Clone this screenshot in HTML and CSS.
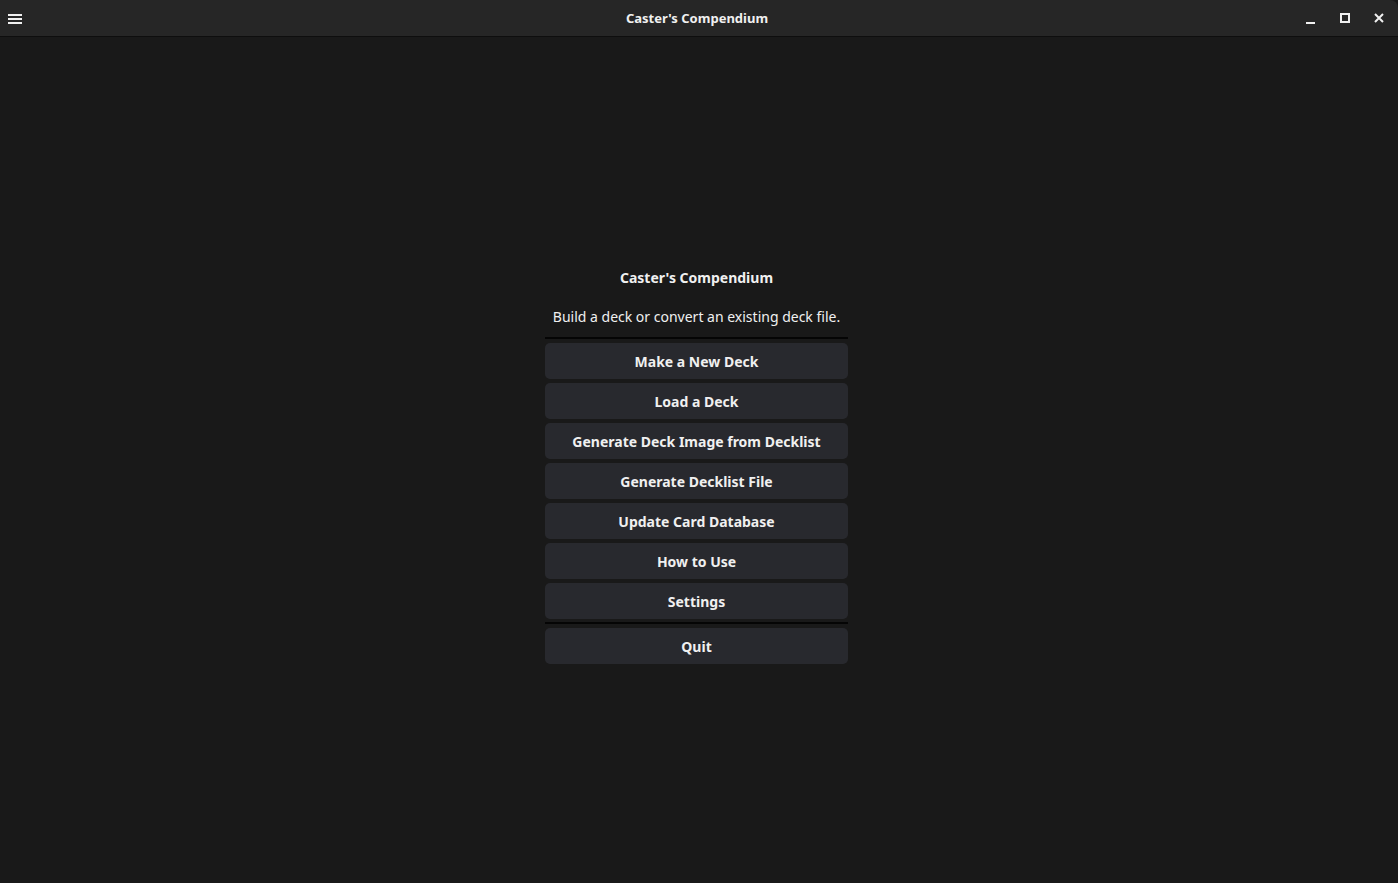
FILE: index.html
```html
<!DOCTYPE html>
<html>

<head>
    <meta charset="utf-8" />
    <title>Caster's Compendium</title>
    <link rel="stylesheet" href="styles.css">
</head>

<body>
    <div class="titlebar">
        <div class="menu-btn">
            <svg width="16" height="14" viewBox="0 0 16 14">
                <rect x="1" y="2" width="14" height="2" fill="#f0f0f0" />
                <rect x="1" y="6" width="14" height="2" fill="#f0f0f0" />
                <rect x="1" y="10" width="14" height="2" fill="#f0f0f0" />
            </svg>
        </div>
        <div class="title">Caster's Compendium</div>
        <div class="controls">
            <div class="ctl">
                <svg width="12" height="12" viewBox="0 0 12 12">
                    <rect x="1" y="10" width="9" height="2" fill="#f0f0f0" />
                </svg>
            </div>
            <div class="ctl">
                <svg width="12" height="12" viewBox="0 0 12 12">
                    <rect x="2" y="2" width="8" height="8" fill="none" stroke="#f0f0f0" stroke-width="2" />
                </svg>
            </div>
            <div class="ctl">
                <svg width="12" height="12" viewBox="0 0 12 12">
                    <path d="M2 2 L10 10 M10 2 L2 10" stroke="#f0f0f0" stroke-width="2" />
                </svg>
            </div>
        </div>
    </div>

    <div class="main">
        <div class="panel">
            <div class="heading">Caster's Compendium</div>
            <div class="subtitle">Build a deck or convert an existing deck file.</div>
            <div class="sep"></div>
            <div class="buttons">
                <button>Make a New Deck</button>
                <button>Load a Deck</button>
                <button>Generate Deck Image from Decklist</button>
                <button>Generate Decklist File</button>
                <button>Update Card Database</button>
                <button>How to Use</button>
                <button>Settings</button>
            </div>
            <div class="sep"></div>
            <div class="buttons">
                <button>Quit</button>
            </div>
        </div>
    </div>
</body>

</html>
```

FILE: styles.css
```css
html, body {
    margin: 0;
    height: 100%;
}

body {
    background-color: #191919;
    color: #f0f0f0;
    font-family: "Noto Sans", sans-serif;
    font-size: 14px;
    display: flex;
    flex-direction: column;
    overflow: hidden;
}

.titlebar {
    height: 36px;
    flex: none;
    display: flex;
    align-items: center;
    background-color: #262626;
    border-bottom: 1px solid #0e0e0e;
    border-top-right-radius: 8px;
    position: relative;
}

.menu-btn {
    width: 30px;
    display: flex;
    justify-content: center;
    padding-top: 1px;
}

.title {
    position: absolute;
    left: 0;
    right: 0;
    padding-right: 4px;
    text-align: center;
    font-size: 13px;
    font-weight: bold;
    pointer-events: none;
}

.controls {
    margin-left: auto;
    display: flex;
    padding-right: 2px;
}

.ctl {
    width: 34px;
    height: 24px;
    display: flex;
    align-items: center;
    justify-content: center;
}

.main {
    flex: 1;
    display: flex;
    justify-content: center;
    padding-top: 230px;
    padding-right: 5px;
}

.panel {
    width: 303px;
    display: flex;
    flex-direction: column;
    align-items: stretch;
}

.heading {
    text-align: center;
    font-weight: bold;
    height: 21px;
    line-height: 21px;
}

.subtitle {
    text-align: center;
    margin-top: 18px;
    margin-bottom: 10px;
    height: 21px;
    line-height: 21px;
}

.sep {
    height: 2px;
    background-color: #050505;
}

.buttons {
    display: flex;
    flex-direction: column;
    gap: 4px;
    padding: 4px 0 3px;
}

button {
    height: 36px;
    border: none;
    border-radius: 5px;
    background-color: #28292e;
    color: #f0f0f0;
    font-family: inherit;
    font-size: 14px;
    font-weight: bold;
}
```
